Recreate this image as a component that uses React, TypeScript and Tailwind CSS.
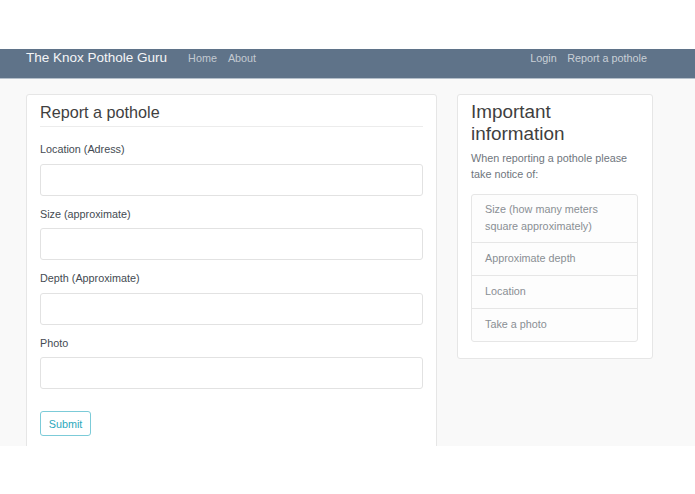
const fields = ['Location (Adress)', 'Size (approximate)', 'Depth (Approximate)', 'Photo'];

const notes = ['Size (how many meters square approximately)', 'Approximate depth', 'Location', 'Take a photo'];

export default function App() {
  return (
    <div className="h-[494px] w-[695px] overflow-hidden bg-white font-['Liberation_Sans',sans-serif] text-[10.8px] leading-[16.2px] text-[#495057]">
      <div className="h-[49px]" />
      <nav className="flex h-[30px] items-start justify-between border-b border-[#b4bfca] bg-[#5f7389] pl-[26px] pr-[48px] pt-[1px]">
        <div className="flex items-center">
          <a className="text-[13.5px] leading-[16.2px] text-[#f4f5f7]">The Knox Pothole Guru</a>
          <a className="ml-[21px] text-[#c3cad2]">Home</a>
          <a className="ml-[11px] text-[#c3cad2]">About</a>
        </div>
        <div className="flex items-center gap-[10.5px] text-[#c9d0d7]">
          <a>Login</a>
          <a>Report a pothole</a>
        </div>
      </nav>
      <main className="flex h-[367px] items-start gap-[20px] overflow-hidden bg-[#f9f9f9] pl-[26px] pt-[15px]">
        <section className="w-[411px] shrink-0 rounded-[3px] border border-[#e6e6e6] bg-white px-[13px] pb-[20px] pt-[7px]">
          <h2 className="border-b border-[#ececec] pb-[3px] text-[16.2px] leading-[21px] text-[#3f3f3f]">Report a pothole</h2>
          <form className="mt-[14px]">
            {fields.map((label) => (
              <div key={label} className="mb-[9.8px]">
                <label className="mb-[6.5px] block text-[#444b52]">{label}</label>
                <input type="text" className="block h-[32px] w-full rounded-[3px] border border-[#e2e2e2] bg-white" />
              </div>
            ))}
            <button type="button" className="mt-[12.2px] h-[25px] w-[51px] rounded-[3px] border border-[#7ccbd8] text-[#2ba8bc]">
              Submit
            </button>
          </form>
        </section>
        <aside className="w-[196px] shrink-0 rounded-[3px] border border-[#e6e6e6] bg-white pb-[16.5px] pl-[13px] pr-[14px] pt-[6px]">
          <h2 className="text-[18.9px] leading-[22px] text-[#3f3f3f]">Important information</h2>
          <p className="mt-[5px] text-[#6f767d]">When reporting a pothole please take notice of:</p>
          <ul className="mt-[12px] rounded-[3px] border border-[#e6e6e6] bg-[#fdfdfd]">
            {notes.map((note, i) => (
              <li key={note} className={`px-[13px] text-[#8a8f94] ${i > 0 ? 'border-t border-[#e6e6e6] pb-[8.8px] pt-[7px]' : 'pb-[8px] pt-[6px]'}`}>
                {note}
              </li>
            ))}
          </ul>
        </aside>
      </main>
    </div>
  );
}
